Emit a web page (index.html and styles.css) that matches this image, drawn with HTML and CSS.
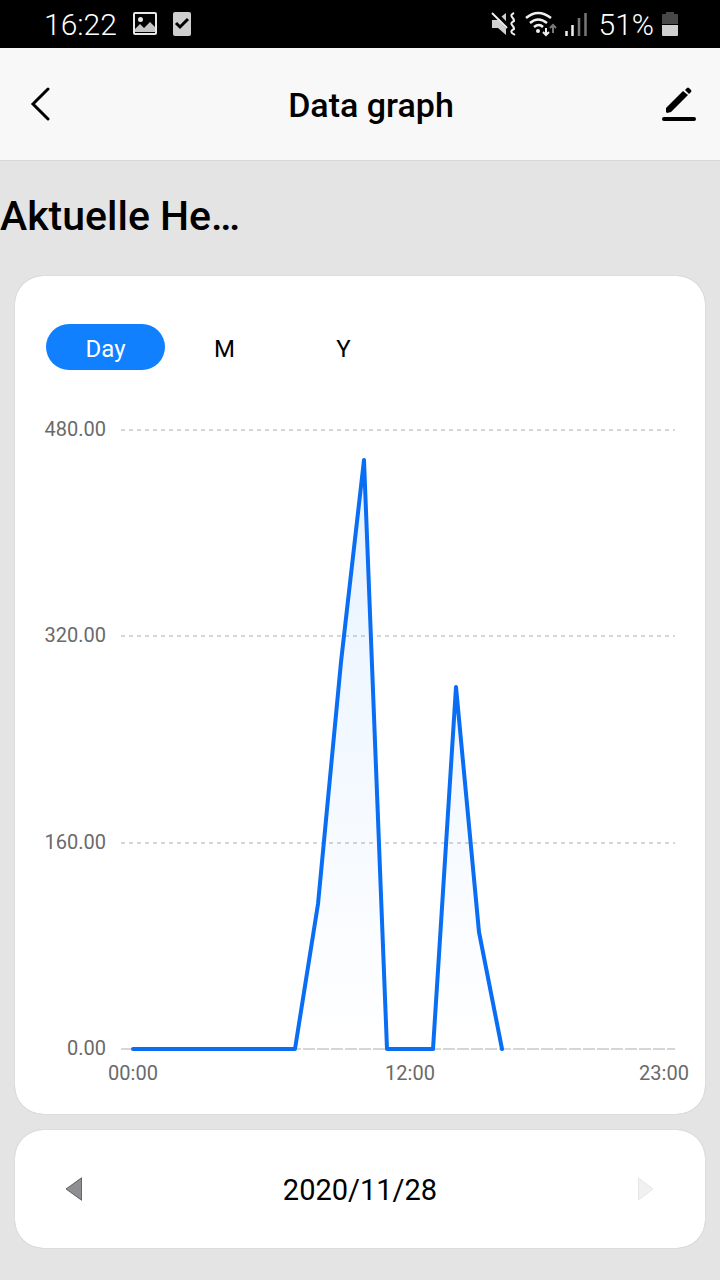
FILE: index.html
```html
<!DOCTYPE html>
<html lang="de">
<head>
    <meta charset="UTF-8">
    <meta name="viewport" content="width=device-width, initial-scale=1.0">
    <title>Data graph</title>
    <link rel="stylesheet" href="styles.css">
</head>
<body>
    <!-- Status bar -->
    <div class="status-bar">
        <div class="status-group">
            <span>16:22</span>
            <svg width="24" height="24" viewBox="0 0 24 24">
                <rect x="1" y="1" width="22" height="21" rx="1" fill="none" stroke="#e8e8e8" stroke-width="2"/>
                <circle cx="7.5" cy="7.5" r="2.5" fill="#e8e8e8"/>
                <path d="M2 20v-3l5-5 4 4 6-6 5 5v5z" fill="#c4c4c4"/>
            </svg>
            <svg width="18" height="24" viewBox="0 0 18 24">
                <rect width="18" height="24" rx="2" fill="#cfcfcf"/>
                <path d="M3 11l4 4 8-8" fill="none" stroke="#000" stroke-width="3"/>
            </svg>
        </div>
        <div class="status-group status-right">
            <svg width="26" height="26" viewBox="0 0 26 26">
                <path d="M1 9h5l9-7v22l-8-7H1z" fill="#cfcfcf"/>
                <path d="M2 0l15 16" stroke="#000" stroke-width="5"/>
                <path d="M1 2l15 15" stroke="#f0f0f0" stroke-width="2"/>
                <path d="M23 2q-4 2-2 4t2 4q-4 2-2 4t2 4q-4 2-2 4l3 2" fill="none" stroke="#f0f0f0" stroke-width="2"/>
            </svg>
            <svg width="32" height="26" viewBox="0 0 32 26">
                <g fill="none" stroke="#f0f0f0" stroke-width="2.5">
                    <path d="M1 7q12-10 25 0"/>
                    <path d="M5 12q8-7 17 0"/>
                    <path d="M9 16q5-4 9 0"/>
                </g>
                <circle cx="13" cy="20" r="2" fill="#f0f0f0"/>
                <path d="M21 17v7M18 21l3 3 3-3" fill="none" stroke="#f0f0f0" stroke-width="2"/>
                <path d="M28 22v-8M25 17l3-3 3 3" fill="none" stroke="#777" stroke-width="2"/>
            </svg>
            <svg width="22" height="24" viewBox="0 0 22 24">
                <path d="M1.5 24v-5M7.5 24v-11" stroke="#f0f0f0" stroke-width="2.5"/>
                <path d="M14 24v-18M20.5 24v-23" stroke="#777" stroke-width="2.5"/>
            </svg>
            <span class="battery-text">51%</span>
            <svg width="16" height="24" viewBox="0 0 16 24">
                <path d="M4 0h8v2h3q1 0 1 1v9H0V3q0-1 1-1h3z" fill="#484848"/>
                <path d="M0 13h16v10q0 1-1 1H1q-1 0-1-1z" fill="#d0d0d0"/>
            </svg>
        </div>
    </div>

    <!-- Header -->
    <header class="header">
        <button class="icon-button back" aria-label="Back">
            <svg width="20" height="34" viewBox="0 0 20 34">
                <path d="M18 2L3 17l15 15" fill="none" stroke="#000" stroke-width="3" stroke-linecap="round"/>
            </svg>
        </button>
        <h1>Data graph</h1>
        <button class="icon-button" aria-label="Edit">
            <svg width="34" height="34" viewBox="0 0 34 34">
                <path d="M4 21L21 4l5 4L9 25l-4 1-1-1z" fill="#000"/>
                <path d="M23 3l2-2q1-1 2 0l2 2q1 1 0 2l-2 2z" fill="#000"/>
                <path d="M2 32h30" stroke="#000" stroke-width="4" stroke-linecap="round"/>
            </svg>
        </button>
    </header>

    <main>
        <h2 class="name">Aktuelle He…</h2>

        <section class="card">
            <div class="tabs">
                <button class="tab active">Day</button>
                <button class="tab">M</button>
                <button class="tab">Y</button>
            </div>

            <svg class="chart" viewBox="0 0 690 700" role="img" aria-label="Data graph">
                <defs>
                    <linearGradient id="fill" x1="0" y1="0" x2="0" y2="1">
                        <stop offset="0" stop-color="#1080ff" stop-opacity="0.1"/>
                        <stop offset="1" stop-color="#1080ff" stop-opacity="0"/>
                    </linearGradient>
                </defs>
                <path class="grid" d="M106 30h554M106 236h554M106 443h554"/>
                <path class="grid axis" d="M106 649h554"/>
                <polygon fill="url(#fill)" points="118,649 280,649 303,504 326,262 349,60 372,649 418,649 441,287 464,532 487,649"/>
                <polyline class="line" points="118,649 280,649 303,504 326,262 349,60 372,649 418,649 441,287 464,532 487,649"/>
                <g class="y-labels">
                    <text x="91" y="36">480.00</text>
                    <text x="91" y="242">320.00</text>
                    <text x="91" y="449">160.00</text>
                    <text x="91" y="655">0.00</text>
                </g>
                <g class="x-labels">
                    <text x="118" y="680">00:00</text>
                    <text x="395" y="680">12:00</text>
                    <text x="649" y="680">23:00</text>
                </g>
            </svg>
        </section>

        <section class="card date-picker">
            <button class="icon-button" aria-label="Previous day">
                <svg width="16" height="24" viewBox="0 0 16 24">
                    <path d="M0 12L16 0v24z" fill="#8e8e93"/>
                    <path d="M0 12L15.5 1v22z" fill="none" stroke="#66666a"/>
                </svg>
            </button>
            <span class="date">2020/11/28</span>
            <button class="icon-button" aria-label="Next day" disabled>
                <svg width="16" height="24" viewBox="0 0 16 24">
                    <path d="M.5 1L15 12 .5 23z" fill="#f1f1f1" stroke="#e6e6e6"/>
                </svg>
            </button>
        </section>
    </main>
</body>
</html>
```
FILE: styles.css
```css
* {
    margin: 0;
    padding: 0;
    box-sizing: border-box;
}

body {
    font-family: Roboto, sans-serif;
    background: #e4e4e4;
    color: #000;
}

button {
    font: inherit;
    color: inherit;
    border: none;
    background: none;
    cursor: pointer;
}

svg {
    display: block;
}

.status-bar {
    display: flex;
    justify-content: space-between;
    align-items: center;
    height: 48px;
    padding: 0 42px 0 44px;
    background: #000;
    color: #fff;
    font-size: 30px;
    font-weight: 300;
}

.status-group {
    display: flex;
    align-items: center;
    gap: 16px;
}

.status-right {
    gap: 8px;
}

.battery-text {
    margin-left: 4px;
}

.header {
    display: flex;
    justify-content: space-between;
    align-items: center;
    height: 113px;
    padding: 0 24px 0 30px;
    background: #f8f8f8;
    border-bottom: 1px solid #d8d8d8;
}

.header h1 {
    padding-top: 2px;
    font-size: 34px;
    font-weight: 500;
}

.icon-button {
    display: flex;
    align-items: center;
}

.back {
    width: 50px;
}

.name {
    padding: 30px 0 35px;
    font-size: 41px;
    font-weight: 500;
    line-height: 50px;
}

.card {
    margin: 0 15px 16px;
    background: #fff;
    border-radius: 28px;
    box-shadow: 0 0 1px rgba(0, 0, 0, 0.3);
}

.tabs {
    display: flex;
    padding: 48px 31px 30px;
}

.tab {
    width: 119px;
    height: 46px;
    padding-top: 4px;
    border-radius: 23px;
    font-size: 24px;
}

.tab.active {
    background: #1080ff;
    color: #fff;
}

.chart {
    width: 100%;
    padding-bottom: 14px;
}

.chart text {
    font-size: 20px;
    fill: #6a6a6a;
}

.y-labels {
    text-anchor: end;
}

.x-labels {
    text-anchor: middle;
}

.grid {
    fill: none;
    stroke: #d6d6d6;
    stroke-width: 2;
    stroke-dasharray: 4 4;
}

.axis {
    stroke-dasharray: 12 2;
}

.line {
    fill: none;
    stroke: #0a6ef5;
    stroke-width: 4;
    stroke-linecap: round;
    stroke-linejoin: round;
}

.date-picker {
    display: flex;
    justify-content: space-between;
    align-items: center;
    height: 118px;
    padding: 0 51px;
}

.date {
    padding-top: 2px;
    font-size: 29px;
}
```
